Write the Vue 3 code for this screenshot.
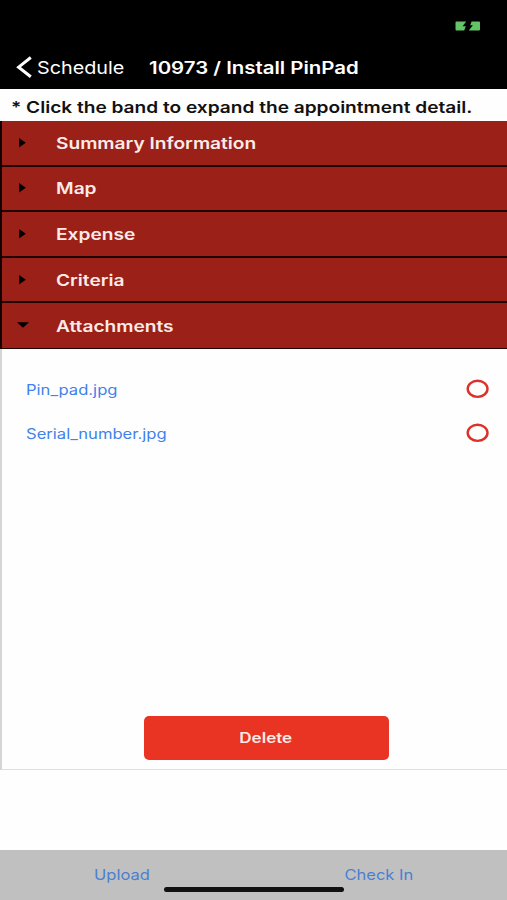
<script setup>
import { ref } from 'vue'

const bands = ref([
  { title: 'Summary Information', open: false },
  { title: 'Map', open: false },
  { title: 'Expense', open: false },
  { title: 'Criteria', open: false },
  { title: 'Attachments', open: true },
])
const files = ['Pin_pad.jpg', 'Serial_number.jpg']
</script>

<template>
  <div class="screen">
    <header class="top">
      <div class="status">
        <svg class="battery" width="26" height="10" viewBox="0 0 26 10">
          <path fill="#65c466" d="M1.5 .5H11.2L7.6 5.2H10.8L9.2 9.5H1.5Q.5 9.5 .5 8.5V1.5Q.5 .5 1.5 .5ZM16.6 .5H24Q25 .5 25 1.5V8.5Q25 9.5 24 9.5H13.8L17.9 4.3H15.2Z" />
        </svg>
      </div>
      <nav class="nav">
        <svg class="chevron" width="18" height="24" viewBox="0 0 18 24">
          <path d="M15.8 2.5L3.6 12.2L15.8 21.8" fill="none" stroke="#fff" stroke-width="3" />
        </svg>
        <span class="back stretch">Schedule</span>
        <span class="title stretch">10973 / Install PinPad</span>
      </nav>
    </header>
    <p class="note"><span class="stretch">* Click the band to expand the appointment detail.</span></p>
    <section class="bands">
      <div v-for="band in bands" :key="band.title" class="band">
        <svg class="marker" width="12" height="10" viewBox="0 0 12 10">
          <path v-if="band.open" d="M0 1.3H12L6 6.8Z" />
          <path v-else d="M2 0L8.8 4.7L2 9.4Z" />
        </svg>
        <span class="stretch">{{ band.title }}</span>
      </div>
    </section>
    <main class="panel">
      <div v-for="file in files" :key="file" class="file">
        <a class="stretch">{{ file }}</a>
        <svg width="24" height="20" viewBox="0 0 24 20">
          <ellipse cx="11.6" cy="9.8" rx="9.9" ry="8.1" fill="none" stroke="#dc3029" stroke-width="2.4" />
        </svg>
      </div>
      <button class="delete"><span>Delete</span></button>
    </main>
    <footer class="bottom">
      <a class="upload stretch">Upload</a>
      <a class="checkin stretch">Check In</a>
      <i class="home"></i>
    </footer>
  </div>
</template>

<style>
body {
  margin: 0;
  background: #fefefe;
}
</style>

<style scoped>
.screen {
  width: 507px;
  height: 900px;
  display: flex;
  flex-direction: column;
  overflow: hidden;
  background: #fefefe;
  font-family: Inter, "Liberation Sans", sans-serif;
  white-space: nowrap;
}
.stretch {
  display: block;
  transform-origin: left center;
}
.top {
  height: 89px;
  box-sizing: border-box;
  background: #000;
  flex: none;
}
.status {
  height: 45px;
  box-sizing: border-box;
  display: flex;
  justify-content: flex-end;
  padding: 21px 26px 0 0;
}
.nav {
  height: 44px;
  display: flex;
  align-items: center;
  padding-left: 15px;
  color: #fff;
}
.chevron {
  margin-right: 4px;
}
.back {
  width: 112px;
  font-size: 17.5px;
  transform: scaleX(1.13);
}
.title {
  padding-top: 1px;
  font-size: 17px;
  font-weight: 600;
  transform: scaleX(1.2);
}
.note {
  flex: none;
  height: 32px;
  margin: 0;
  padding-left: 11px;
  line-height: 36px;
  font-size: 16px;
  font-weight: 600;
  color: #111;
}
.note .stretch {
  width: max-content;
  transform: scaleX(1.193);
}
.bands {
  flex: none;
  border-left: 2px solid #160000;
}
.band {
  height: 45.6px;
  box-sizing: border-box;
  display: flex;
  align-items: center;
  border-bottom: 2px solid #210000;
  padding-left: 15px;
  background: #9a2018;
  color: #fbeae7;
  font-size: 16px;
  font-weight: 600;
}
.band:last-child {
  border-bottom-width: 1px;
}
.marker {
  margin-right: 27px;
}
.band .stretch {
  transform: scaleX(1.195);
}
.panel {
  flex: none;
  height: 421px;
  box-sizing: border-box;
  display: flex;
  flex-direction: column;
  border-left: 2px solid #d5d5d5;
  border-bottom: 1px solid #dedede;
  padding: 18px 17px 9px 23.5px;
}
.file {
  height: 44px;
  display: flex;
  align-items: center;
  justify-content: space-between;
  color: #3e82ec;
  font-size: 14px;
}
.file .stretch {
  padding-top: 1px;
  transform: scaleX(1.185);
}
.delete {
  width: 245px;
  height: 44px;
  margin: auto 0 0 118px;
  border: 0;
  border-radius: 5px;
  background: #e93323;
  color: #fdebe5;
  font: 600 14px Inter, "Liberation Sans", sans-serif;
  flex: none;
}
.delete span {
  display: inline-block;
  transform: scaleX(1.22);
}
.bottom {
  height: 50px;
  margin-top: auto;
  display: flex;
  position: relative;
  background: #c0c0c0;
  color: #4a80d2;
  font-size: 14.5px;
  line-height: 50px;
}
.upload {
  width: 251px;
  padding-left: 94px;
  box-sizing: border-box;
  transform-origin: 94px center;
  transform: scaleX(1.14);
}
.checkin {
  padding-left: 93.5px;
  transform-origin: 94px center;
  transform: scaleX(1.14);
}
.home {
  position: absolute;
  left: 164px;
  bottom: 8px;
  width: 180px;
  height: 5px;
  border-radius: 3px;
  background: #111;
}
</style>
